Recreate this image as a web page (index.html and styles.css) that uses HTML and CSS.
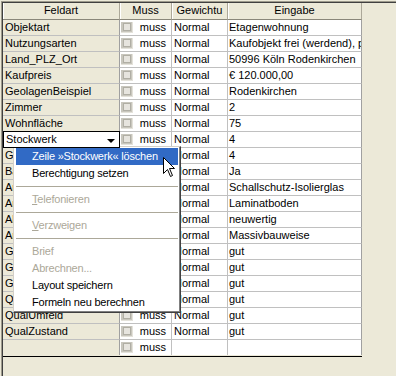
FILE: index.html
```html
<!DOCTYPE html>
<html lang="de">
<head>
<meta charset="utf-8">
<title>Felder</title>
<link rel="stylesheet" href="styles.css">
</head>
<body>
<div class="window">
  <div class="frame">
    <div class="grid">
      <div class="row head">
        <div class="hc">Feldart</div>
        <div class="hc">Muss</div>
        <div class="hc">Gewichtu</div>
        <div class="hc">Eingabe</div>
      </div>
      <div class="row"><div class="c f">Objektart</div><div class="c m"><span class="cb"></span><span class="mt">muss</span></div><div class="c g">Normal</div><div class="c e">Etagenwohnung</div></div>
      <div class="row"><div class="c f">Nutzungsarten</div><div class="c m"><span class="cb"></span><span class="mt">muss</span></div><div class="c g">Normal</div><div class="c e">Kaufobjekt frei (werdend), provisionsfrei</div></div>
      <div class="row"><div class="c f">Land_PLZ_Ort</div><div class="c m"><span class="cb"></span><span class="mt">muss</span></div><div class="c g">Normal</div><div class="c e">50996 Köln Rodenkirchen</div></div>
      <div class="row"><div class="c f">Kaufpreis</div><div class="c m"><span class="cb"></span><span class="mt">muss</span></div><div class="c g">Normal</div><div class="c e">€ 120.000,00</div></div>
      <div class="row"><div class="c f">GeolagenBeispiel</div><div class="c m"><span class="cb"></span><span class="mt">muss</span></div><div class="c g">Normal</div><div class="c e">Rodenkirchen</div></div>
      <div class="row"><div class="c f">Zimmer</div><div class="c m"><span class="cb"></span><span class="mt">muss</span></div><div class="c g">Normal</div><div class="c e">2</div></div>
      <div class="row"><div class="c f">Wohnfläche</div><div class="c m"><span class="cb"></span><span class="mt">muss</span></div><div class="c g">Normal</div><div class="c e">75</div></div>
      <div class="row"><div class="c f editing"><span>Stockwerk</span><span class="arrow"></span></div><div class="c m"><span class="cb"></span><span class="mt">muss</span></div><div class="c g">Normal</div><div class="c e">4</div></div>
      <div class="row"><div class="c f">Geschosse</div><div class="c m"><span class="cb"></span><span class="mt">muss</span></div><div class="c g">Normal</div><div class="c e">4</div></div>
      <div class="row"><div class="c f">Balkon</div><div class="c m"><span class="cb"></span><span class="mt">muss</span></div><div class="c g">Normal</div><div class="c e">Ja</div></div>
      <div class="row"><div class="c f">AusstattungFenster</div><div class="c m"><span class="cb"></span><span class="mt">muss</span></div><div class="c g">Normal</div><div class="c e">Schallschutz-Isolierglas</div></div>
      <div class="row"><div class="c f">AusstattungBoden</div><div class="c m"><span class="cb"></span><span class="mt">muss</span></div><div class="c g">Normal</div><div class="c e">Laminatboden</div></div>
      <div class="row"><div class="c f">AlterZustand</div><div class="c m"><span class="cb"></span><span class="mt">muss</span></div><div class="c g">Normal</div><div class="c e">neuwertig</div></div>
      <div class="row"><div class="c f">ArtBauweise</div><div class="c m"><span class="cb"></span><span class="mt">muss</span></div><div class="c g">Normal</div><div class="c e">Massivbauweise</div></div>
      <div class="row"><div class="c f">GeoVerkehr</div><div class="c m"><span class="cb"></span><span class="mt">muss</span></div><div class="c g">Normal</div><div class="c e">gut</div></div>
      <div class="row"><div class="c f">GeoEinkauf</div><div class="c m"><span class="cb"></span><span class="mt">muss</span></div><div class="c g">Normal</div><div class="c e">gut</div></div>
      <div class="row"><div class="c f">GeoSchulen</div><div class="c m"><span class="cb"></span><span class="mt">muss</span></div><div class="c g">Normal</div><div class="c e">gut</div></div>
      <div class="row"><div class="c f">QualLage</div><div class="c m"><span class="cb"></span><span class="mt">muss</span></div><div class="c g">Normal</div><div class="c e">gut</div></div>
      <div class="row"><div class="c f">QualUmfeld</div><div class="c m"><span class="cb"></span><span class="mt">muss</span></div><div class="c g">Normal</div><div class="c e">gut</div></div>
      <div class="row"><div class="c f">QualZustand</div><div class="c m"><span class="cb"></span><span class="mt">muss</span></div><div class="c g">Normal</div><div class="c e">gut</div></div>
      <div class="row last"><div class="c f"></div><div class="c m"><span class="cb"></span><span class="mt">muss</span></div><div class="c g"></div><div class="c e"></div></div>
    </div>
  </div>

  <div class="menu">
    <div class="item active">Zeile »Stockwerk« löschen</div>
    <div class="item">Berechtigung setzen</div>
    <div class="sep"></div>
    <div class="item off"><u>T</u>elefonieren</div>
    <div class="sep"></div>
    <div class="item off"><u>V</u>erzweigen</div>
    <div class="sep"></div>
    <div class="item off">Brief</div>
    <div class="item off">Abrechnen...</div>
    <div class="item">Layout speichern</div>
    <div class="item">Formeln neu berechnen</div>
  </div>

  <svg class="cursor" width="13" height="21" viewBox="0 0 13 21">
    <path d="M0.5 0.5 L0.5 16.5 L4.5 12.5 L7.5 19.5 L9.5 18.5 L6.5 11.5 L11.5 11.5 Z" fill="#fff" stroke="#000" stroke-width="1"/>
  </svg>
</div>
</body>
</html>
```

FILE: styles.css
```css
html, body {
  margin: 0;
  padding: 0;
}
body {
  width: 396px;
  height: 376px;
  overflow: hidden;
  background: #ece9d8;
  font-family: "Liberation Sans", Arial, sans-serif;
  font-size: 11px;
  color: #000;
}
.window {
  position: relative;
  height: 375px;
  margin: 1px 0 0 1px;
  border-top: 1px solid #9d9a8c;
  border-left: 1px solid #9d9a8c;
}
.frame {
  height: 374px;
  border-top: 1px solid #404040;
  border-left: 1px solid #404040;
}
.grid {
  width: 359px;
  display: flex;
  flex-direction: column;
  border-bottom: 1px solid #000;
}
.row {
  display: grid;
  grid-template-columns: 117px 52px 56px 134px;
  height: 16px;
}
.row.head {
  height: 17px;
}
.row.last .c {
  border-bottom: none;
  height: 15px;
}
.hc {
  box-sizing: border-box;
  height: 17px;
  line-height: 15px;
  text-align: center;
  background: #ece9d8;
  border-right: 1px solid #aca899;
  border-bottom: 1px solid #8a877a;
  box-shadow: inset 1px 0 #fff;
  white-space: nowrap;
  overflow: hidden;
}
.c {
  box-sizing: border-box;
  height: 16px;
  line-height: 15px;
  border-right: 1px solid #c0c0c0;
  border-bottom: 1px solid #c0c0c0;
  background: #fff;
  white-space: nowrap;
  overflow: hidden;
}
.f {
  background: #ece9d8;
  padding-left: 2px;
  border-right-color: #a0a0a0;
}
.f.editing {
  position: relative;
  z-index: 3;
  display: flex;
  align-items: center;
  justify-content: space-between;
  background: #fff;
  border: 1px solid #000;
  margin-top: -1px;
  height: 17px;
  padding: 0 4px 0 2px;
}
.arrow {
  width: 0;
  height: 0;
  border-left: 4px solid transparent;
  border-right: 4px solid transparent;
  border-top: 4px solid #000;
  margin-top: 2px;
}
.m {
  display: flex;
  align-items: center;
  padding: 0 5px 0 1px;
}
.cb {
  box-sizing: border-box;
  width: 12px;
  height: 11px;
  background: #c8c6bd;
  border-right: 1px solid #e4e2da;
  border-bottom: 1px solid #e4e2da;
  position: relative;
}
.cb::after {
  content: "";
  position: absolute;
  left: 2px;
  top: 1px;
  width: 8px;
  height: 8px;
  background: #e6e4de;
  border: 1px solid #b0aea4;
  box-sizing: border-box;
}
.mt {
  margin-left: auto;
}
.g {
  padding-left: 2px;
}
.e {
  padding-left: 1px;
  border-right-color: #a0a0a0;
}
.menu {
  position: absolute;
  left: 11px;
  top: 144px;
  z-index: 2;
  box-sizing: border-box;
  width: 168px;
  padding: 1px 2px 1px 2px;
  background: #fff;
  border: 1px solid;
  border-color: #d4d0c8 #404040 #404040 #d4d0c8;
  box-shadow: inset -1px -1px #808080, inset 1px 1px #fff;
  display: flex;
  flex-direction: column;
}
.item {
  height: 17px;
  line-height: 17px;
  padding-left: 16px;
  white-space: nowrap;
  letter-spacing: -0.2px;
}
.item.active {
  background: #316ac5;
  color: #fff;
}
.item.off {
  color: #aca899;
}
.sep {
  height: 9px;
  display: flex;
  align-items: center;
}
.sep::before {
  content: "";
  flex: 1;
  height: 1px;
  background: #aca899;
}
.cursor {
  position: absolute;
  left: 161px;
  top: 155px;
  z-index: 4;
}
```
